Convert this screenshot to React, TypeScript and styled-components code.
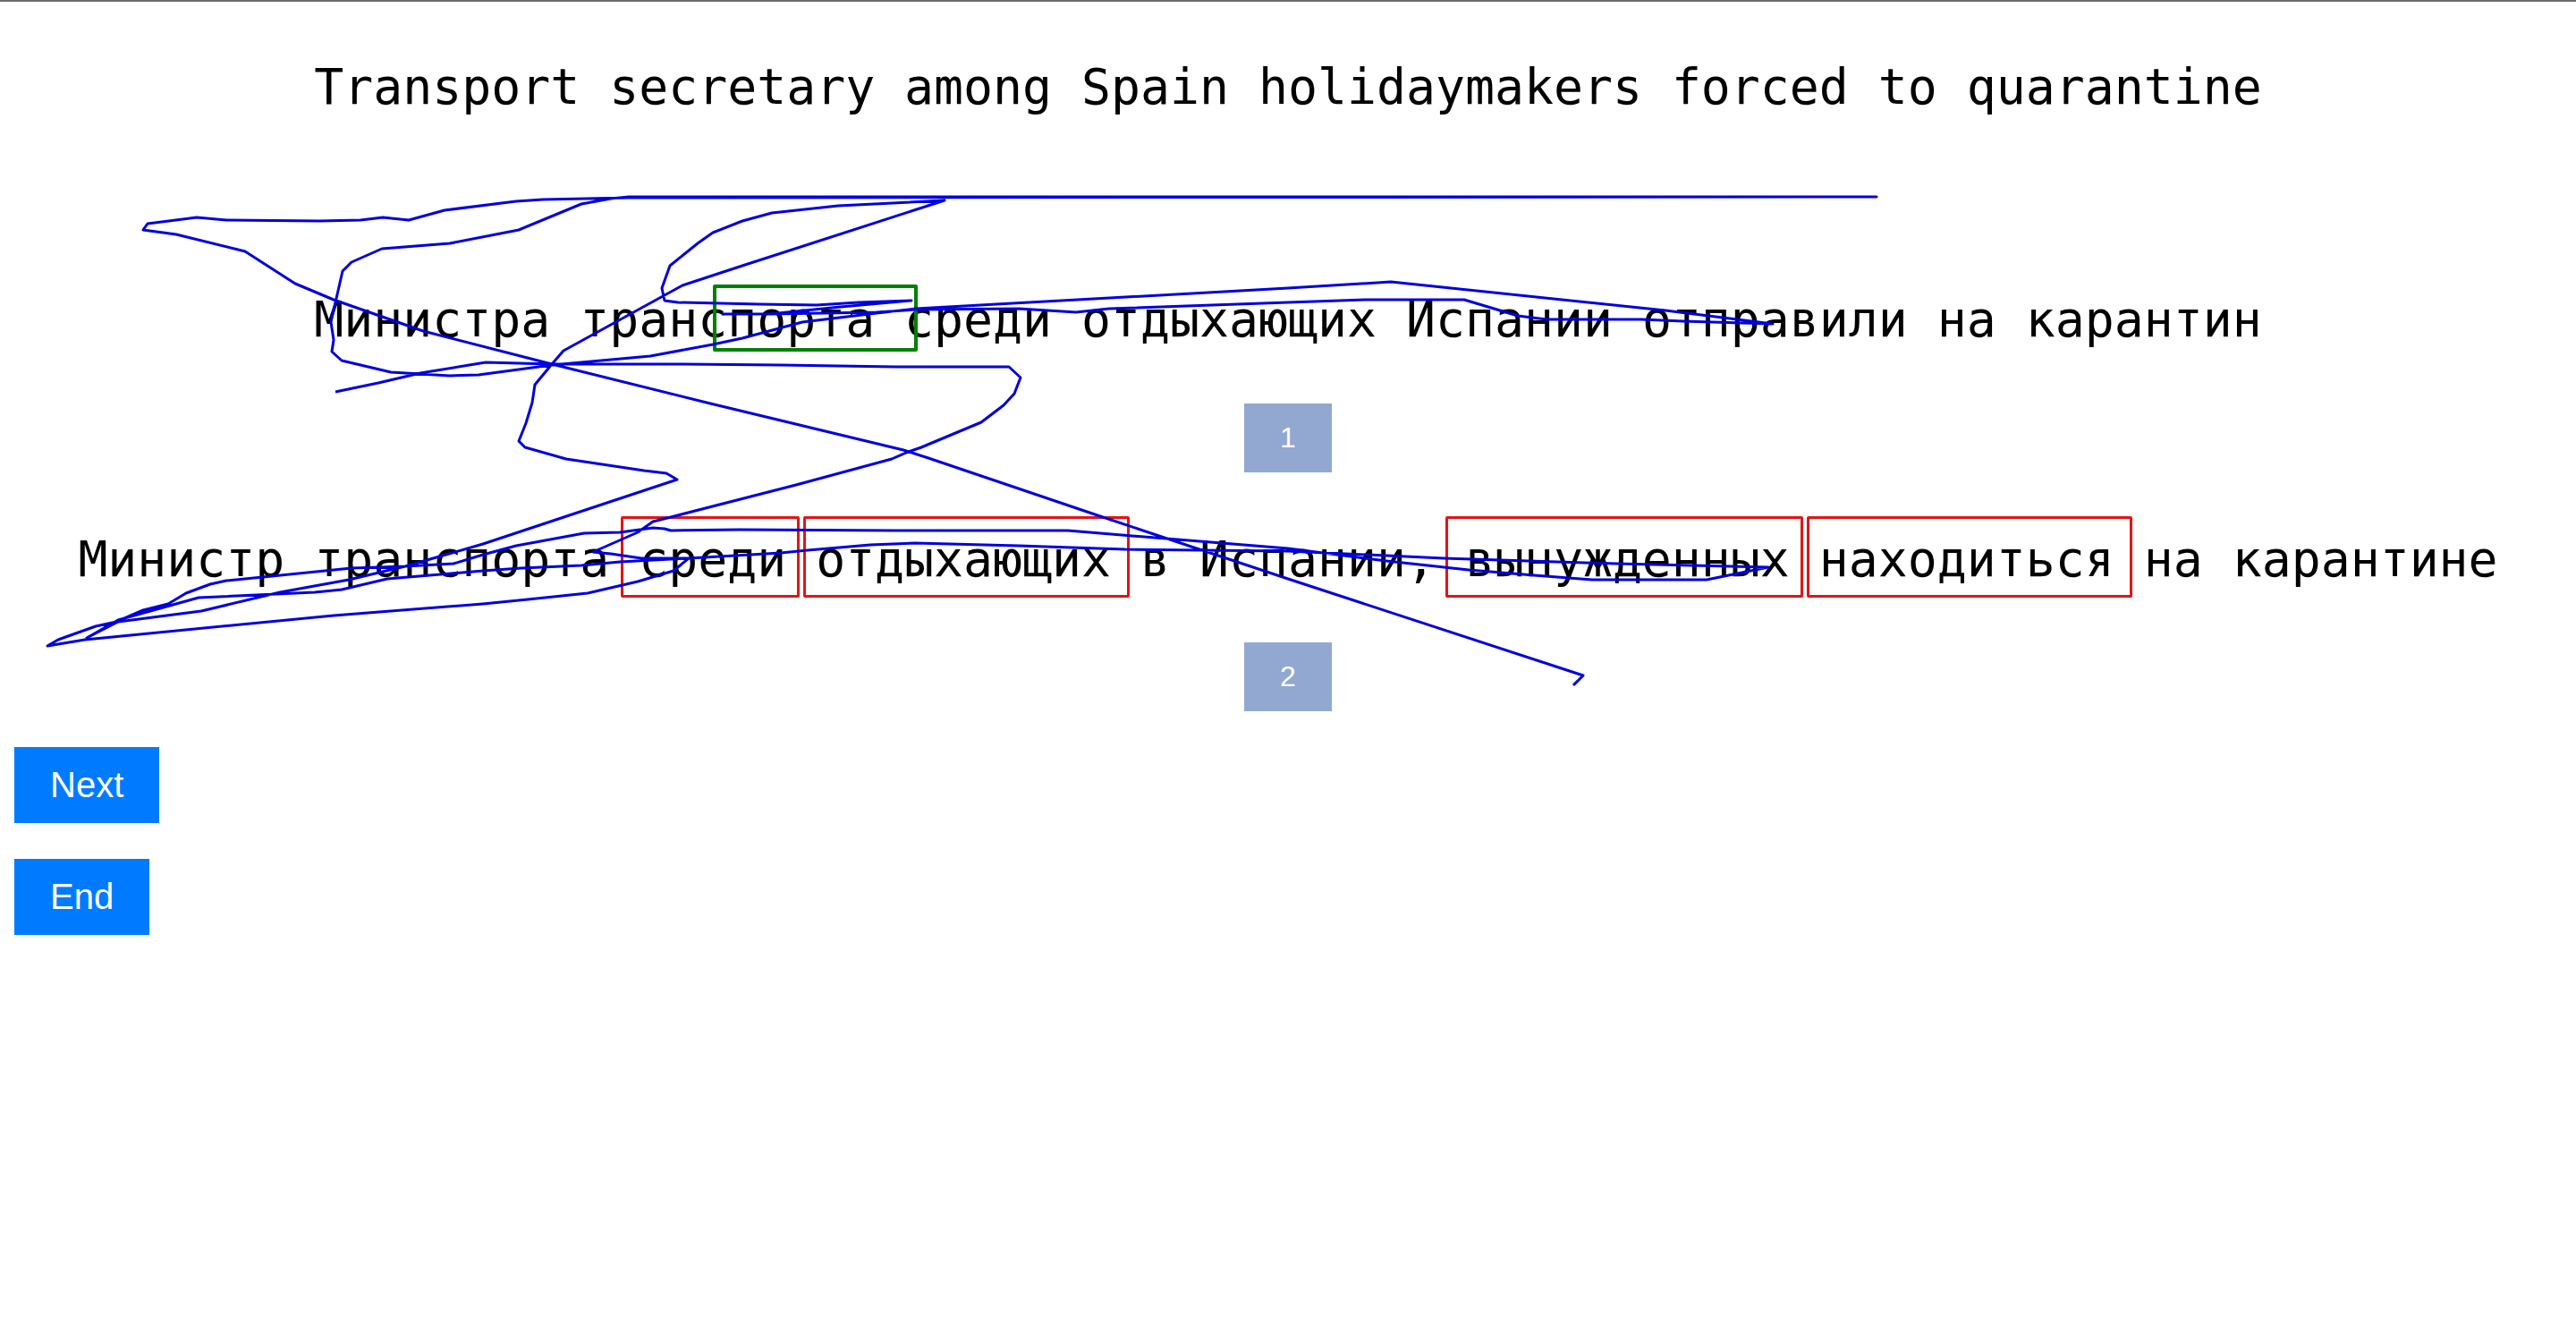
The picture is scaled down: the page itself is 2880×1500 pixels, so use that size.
import React from 'react';
import styled, { createGlobalStyle } from 'styled-components';

const GlobalStyle = createGlobalStyle`
  html, body {
    margin: 0;
    padding: 0;
    background: #fff;
  }
`;

const Page = styled.div`
  position: relative;
  min-height: 1500px;
  border-top: 2px solid #6e6e6e;
  box-sizing: border-box;
  display: flex;
  flex-direction: column;
`;

const SentenceRow = styled.div<{ $top: number }>`
  margin-top: ${({ $top }) => $top}px;
  display: flex;
  justify-content: center;
`;

const Sentence = styled.div`
  position: relative;
  font-family: 'DejaVu Sans Mono', monospace;
  font-size: 54.8px;
  line-height: 64px;
  color: #000;
  white-space: pre;
`;

const WordBox = styled.span<{ $color: string; $left: number; $width: number; $top: number; $height: number; $border: number }>`
  position: absolute;
  box-sizing: border-box;
  left: ${({ $left }) => $left}px;
  top: ${({ $top }) => $top}px;
  width: ${({ $width }) => $width}px;
  height: ${({ $height }) => $height}px;
  border: ${({ $border }) => $border}px solid ${({ $color }) => $color};
  border-radius: 2px;
`;

const NumberRow = styled.div<{ $top: number }>`
  margin-top: ${({ $top }) => $top}px;
  display: flex;
  justify-content: center;
`;

const NumberBox = styled.div`
  width: 98px;
  height: 77px;
  background: #92a8d1;
  color: #fff;
  font-family: 'Liberation Sans', Arial, sans-serif;
  font-size: 32px;
  display: flex;
  align-items: center;
  justify-content: center;
`;

const Actions = styled.div`
  margin-top: 40px;
  display: flex;
  flex-direction: column;
  align-items: flex-start;
  gap: 40px;
  padding-left: 16px;
`;

const ActionButton = styled.button`
  height: 85px;
  padding: 0 40px;
  border: none;
  background: #007bff;
  color: #fff;
  font-family: 'Liberation Sans', Arial, sans-serif;
  font-size: 40px;
`;

const Trace = styled.svg`
  position: absolute;
  left: 0;
  top: -2px;
  width: 2880px;
  height: 1500px;
  pointer-events: none;
`;

// gaze trace, one long stroke across the sentences
const tracePoints = [
  [375, 438], [423, 428], [470, 417], [543, 405], [617, 407], [763, 407], [872, 408], [1001, 410], [1128, 410],
  [1141, 422], [1134, 440], [1122, 453], [1097, 472], [1030, 500], [1013, 506], [997, 513], [890, 542], [750, 578],
  [730, 583], [713, 595], [663, 617], [683, 619], [717, 624], [770, 624], [753, 638], [713, 650], [657, 663],
  [590, 670], [540, 675], [373, 688], [95, 715], [53, 722], [65, 715], [107, 700], [130, 695], [160, 682],
  [188, 675], [208, 663], [235, 653], [253, 649], [393, 635], [453, 633], [507, 630], [540, 620], [577, 610],
  [653, 596], [693, 595], [730, 590], [743, 591], [750, 593], [827, 592], [1000, 593], [1194, 593], [1304, 602],
  [1440, 613], [1550, 627], [1642, 637], [1715, 643], [1780, 648], [1908, 648], [1977, 634], [1807, 630],
  [1614, 624], [1440, 616], [1258, 614], [1139, 610], [1023, 607], [973, 609], [903, 615], [873, 618], [770, 624],
  [693, 628], [650, 632], [583, 635], [540, 638], [433, 647], [382, 659], [352, 662], [222, 668], [132, 693],
  [97, 713], [132, 695], [225, 683], [313, 662], [390, 648], [453, 633], [540, 608], [757, 536], [745, 529],
  [720, 526], [633, 513], [587, 500], [580, 493], [588, 473], [595, 450], [598, 430], [617, 407], [630, 392],
  [763, 319], [830, 297], [1056, 224], [937, 230], [863, 238], [830, 247], [797, 260], [780, 272], [749, 297],
  [740, 322], [743, 336], [758, 338], [849, 340], [913, 341], [960, 338], [1019, 336], [940, 343], [860, 351],
  [808, 351], [860, 351], [980, 349], [1024, 346], [1139, 345], [1203, 349], [1240, 345], [1440, 338], [1527, 335],
  [1637, 335], [1697, 353], [1729, 357], [1835, 357], [1881, 359], [1982, 362], [1862, 347], [1555, 315],
  [1440, 322], [1024, 345], [980, 350], [897, 360], [830, 378], [797, 385], [727, 398], [617, 408], [535, 419],
  [503, 420], [437, 416], [382, 403], [371, 393], [373, 380], [370, 360], [383, 303], [393, 293], [427, 278],
  [503, 272], [580, 257], [650, 228], [683, 222], [703, 220], [2098, 220], [703, 221], [607, 223], [577, 225],
  [497, 235], [457, 246], [428, 243], [403, 246], [357, 247], [253, 246], [220, 243], [165, 250], [160, 257],
  [197, 262], [274, 281], [330, 317], [373, 335], [473, 370], [617, 407], [790, 450], [1010, 503], [1038, 512],
  [1230, 577], [1440, 647], [1770, 755], [1759, 766],
];

const App: React.FC = () => {
  return (
    <Page>
      <GlobalStyle />
      <SentenceRow $top={63}>
        <Sentence>Transport secretary among Spain holidaymakers forced to quarantine</Sentence>
      </SentenceRow>
      <SentenceRow $top={196}>
        <Sentence>
          Министра транспорта среди отдыхающих Испании отправили на карантин
          <WordBox $color="#008000" $left={446} $width={229} $top={-7} $height={75} $border={4} />
        </Sentence>
      </SentenceRow>
      <NumberRow $top={62}>
        <NumberBox>1</NumberBox>
      </NumberRow>
      <SentenceRow $top={65}>
        <Sentence>
          Министр транспорта среди отдыхающих в Испании, вынужденных находиться на карантине
          <WordBox $color="#e31414" $left={607} $width={200} $top={-16} $height={91} $border={3} />
          <WordBox $color="#e31414" $left={811} $width={365} $top={-16} $height={91} $border={3} />
          <WordBox $color="#e31414" $left={1529} $width={400} $top={-16} $height={91} $border={3} />
          <WordBox $color="#e31414" $left={1933} $width={364} $top={-16} $height={91} $border={3} />
        </Sentence>
      </SentenceRow>
      <NumberRow $top={61}>
        <NumberBox>2</NumberBox>
      </NumberRow>
      <Actions>
        <ActionButton>Next</ActionButton>
        <ActionButton>End</ActionButton>
      </Actions>
      <Trace viewBox="0 0 2880 1500">
        <polyline
          points={tracePoints.map((p) => p.join(',')).join(' ')}
          fill="none"
          stroke="#0000e0"
          strokeWidth={3}
          strokeLinejoin="round"
        />
      </Trace>
    </Page>
  );
};

export default App;
